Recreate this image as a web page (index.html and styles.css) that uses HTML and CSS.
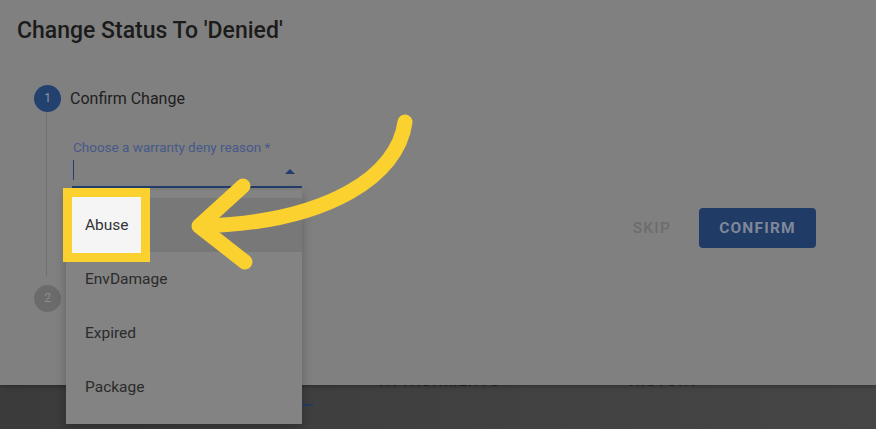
FILE: index.html
```html
<!DOCTYPE html>
<html lang="en">
<head>
    <meta charset="UTF-8">
    <meta name="viewport" content="width=device-width, initial-scale=1.0">
    <title>Change Status</title>
    <link rel="stylesheet" href="styles.css">
</head>
<body>
    <!-- dimmed dialog -->
    <div class="dialog">
        <h2 class="dialog-title">Change Status To 'Denied'</h2>

        <div class="stepper">
            <div class="step">
                <span class="step-icon active">1</span>
                <span class="step-label">Confirm Change</span>
            </div>
            <div class="step-content">
                <div class="field">
                    <label class="field-label">Choose a warranty deny reason *</label>
                    <div class="field-input">
                        <span class="caret"></span>
                        <span class="select-arrow"></span>
                    </div>
                </div>
                <div class="actions">
                    <button class="btn-skip">SKIP</button>
                    <button class="btn-confirm">CONFIRM</button>
                </div>
            </div>
            <div class="step step-next">
                <span class="step-icon">2</span>
            </div>
        </div>
    </div>

    <!-- page behind the dialog -->
    <div class="page-tabs">
        <span class="tab tab-active"></span>
        <span class="tab">ATTACHMENTS</span>
        <span class="tab">HISTORY</span>
    </div>

    <!-- select menu -->
    <ul class="menu">
        <li class="menu-item selected"><span class="spotlight">Abuse</span></li>
        <li class="menu-item">EnvDamage</li>
        <li class="menu-item">Expired</li>
        <li class="menu-item">Package</li>
    </ul>

    <!-- pointer arrow -->
    <svg class="pointer" width="876" height="429" viewBox="0 0 876 429">
        <path d="M405 122 C398 175 330 222 203 226" fill="none" stroke="#fbd130" stroke-width="15" stroke-linecap="round"/>
        <path d="M243 186 L199 226 L245 262" fill="none" stroke="#fbd130" stroke-width="15" stroke-linecap="round" stroke-linejoin="round"/>
    </svg>
</body>
</html>
```

FILE: styles.css
```css
/* base */
body {
    margin: 0;
    width: 876px;
    height: 429px;
    overflow: hidden;
    position: relative;
    font-family: Roboto, 'Liberation Sans', sans-serif;
    background: linear-gradient(to right, #3b3b3b, #464646);
}

/* dialog */
.dialog {
    height: 385px;
    background: #808080;
    box-sizing: border-box;
    padding-top: 16px;
    position: relative;
    z-index: 1;
    box-shadow: 0 2px 4px rgba(0, 0, 0, 0.25);
}

.dialog-title {
    margin: 0 0 0 17px;
    font-size: 23px;
    font-weight: 500;
    line-height: 30px;
    color: #1b1b1b;
}

/* stepper */
.stepper {
    margin-top: 38px;
}

.step {
    display: flex;
    align-items: center;
    padding-left: 34px;
    height: 28px;
}

.step-icon {
    width: 27px;
    height: 27px;
    border-radius: 50%;
    background: #6b6b6b;
    color: #8c8c8c;
    font-size: 12px;
    display: flex;
    align-items: center;
    justify-content: center;
}

.step-icon.active {
    background: #22416f;
    color: #8d97aa;
}

.step-label {
    margin-left: 9px;
    font-size: 16px;
    color: #1e1e1e;
}

.step-content {
    margin: 0 60px 0 46px;
    border-left: 1px solid #6f6f6f;
    padding: 27px 0 28px 26px;
}

.step-next {
    margin-top: 8px;
}

/* select field */
.field {
    width: 229px;
}

.field-label {
    display: block;
    font-size: 13.5px;
    line-height: 16px;
    color: #46598a;
}

.field-input {
    position: relative;
    height: 31px;
    border-bottom: 2px solid #233e6d;
    margin-left: -1px;
}

.caret {
    position: absolute;
    left: 1px;
    top: 5px;
    width: 1px;
    height: 20px;
    background: #233e6d;
}

.select-arrow {
    position: absolute;
    right: 7px;
    top: 14px;
    border-left: 5px solid transparent;
    border-right: 5px solid transparent;
    border-bottom: 5px solid #233e6d;
}

/* actions */
.actions {
    display: flex;
    justify-content: flex-end;
    align-items: center;
    gap: 16px;
    margin-top: 20px;
}

.actions button {
    font-family: inherit;
    font-size: 15.5px;
    letter-spacing: 1.2px;
    border: none;
    height: 40px;
    border-radius: 4px;
}

.btn-skip {
    background: none;
    color: #6c6c6c;
    font-weight: 500;
    padding: 0 12px;
}

.btn-confirm {
    background: #213b67;
    color: #7f8898;
    font-weight: 700;
    width: 117px;
    padding: 0;
}

/* tabs of the page behind */
.page-tabs {
    display: flex;
    margin-top: -12px;
    height: 56px;
    font-size: 15px;
    font-weight: 500;
    letter-spacing: 1.2px;
    color: #1f1f1f;
}

.tab {
    display: block;
    line-height: 16px;
    text-align: center;
}

.tab-active {
    width: 173px;
    margin-left: 140px;
    height: 33px;
    box-sizing: border-box;
    border-bottom: 2px solid #243a5e;
    flex-shrink: 0;
}

.tab:nth-child(2) {
    width: 126px;
    margin-left: 64px;
}

.tab:nth-child(3) {
    width: 74px;
    margin-left: 124px;
}

/* menu */
.menu {
    position: absolute;
    left: 66px;
    top: 190px;
    width: 236px;
    margin: 0;
    padding: 8px 0 10px;
    list-style: none;
    background: #838383;
    box-shadow: 0 4px 10px rgba(0, 0, 0, 0.25);
    z-index: 2;
}

.menu-item {
    height: 54px;
    display: flex;
    align-items: center;
    padding-left: 19px;
    font-size: 15.5px;
    color: #2b2b2b;
}

.menu-item.selected {
    background: #787878;
    padding-left: 6px;
}

.spotlight {
    display: flex;
    align-items: center;
    height: 56px;
    padding: 0 12px 0 13px;
    background: #f5f5f5;
    color: #333;
    box-shadow: 0 0 0 9px #fbd130;
}

.pointer {
    position: absolute;
    left: 0;
    top: 0;
    z-index: 3;
}
```
